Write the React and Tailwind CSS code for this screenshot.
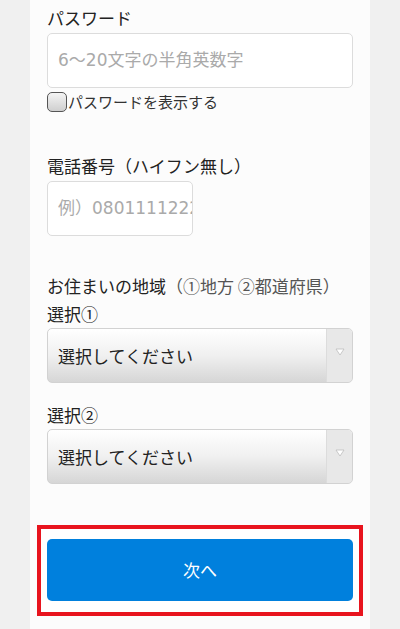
import React from 'react';

const font = { fontFamily: '"Noto Sans CJK JP", "Noto Sans", sans-serif' };
const placeholderFont = { fontFamily: '"DejaVu Sans", "Noto Sans CJK JP", sans-serif' };

const SelectBox = () => (
  <div className="mt-[2px] flex h-[55px] w-full overflow-hidden rounded-[5px] border border-[#d2d2d2] bg-gradient-to-b from-[#ffffff] via-[#f0f0f0] to-[#d6d6d6]">
    <div className="flex flex-1 items-center pl-[10px] text-[17px] text-[#222]">選択してください</div>
    <div className="flex w-[26px] items-start justify-center border-l border-[#dcdcdc] bg-[#e8e8e8] pt-[19px]">
      <svg width="10" height="8" viewBox="0 0 10 8">
        <path d="M1 1 L9 1 L5 7 Z" fill="#ffffff" stroke="#bdbdbd" strokeWidth="0.8" />
      </svg>
    </div>
  </div>
);

const App = () => {
  return (
    <div className="min-h-[629px] bg-[#f0f0f0]" style={font}>
      <div className="mx-auto min-h-[629px] w-[340px] bg-[#fcfcfc] px-[17px] pt-[5px]">
        {/* Password */}
        <div className="text-[17px] leading-[25px] text-[#222]">パスワード</div>
        <div
          className="mt-[3px] flex h-[55px] items-center rounded-[5px] border border-[#dcdcdc] bg-white pl-[10px] text-[17px] text-[#aaa]"
          style={placeholderFont}
        >
          6〜20文字の半角英数字
        </div>
        <div className="mt-[4px] flex h-[20px] items-center">
          <span className="h-[20px] w-[20px] rounded-[5px] border-[1.5px] border-[#555] bg-gradient-to-b from-[#f4f4f4] to-[#cfcfcf]" />
          <span className="ml-[1px] text-[15px] leading-[20px] text-[#333]">パスワードを表示する</span>
        </div>

        {/* Phone */}
        <div className="mt-[41px] text-[17px] leading-[25px] text-[#222]">電話番号（ハイフン無し）</div>
        <div
          className="mt-[3px] flex h-[55px] w-[146px] items-center overflow-hidden whitespace-nowrap rounded-[5px] border border-[#dcdcdc] bg-white pl-[10px] text-[17px] text-[#aaa]"
          style={placeholderFont}
        >
          例）08011112222
        </div>

        {/* Region */}
        <div className="mt-[37px] text-[17px] leading-[25px] text-[#222]">
          お住まいの地域<span className="text-[#555]">（①地方 ②都道府県）</span>
        </div>
        <div className="mt-[3px] text-[17px] leading-[25px] text-[#222]">選択①</div>
        <SelectBox />
        <div className="mt-[19px] text-[17px] leading-[25px] text-[#222]">選択②</div>
        <SelectBox />

        {/* Next */}
        <div className="-mx-[10px] mt-[41px] border-4 border-[#e8141e] bg-white px-[6px] pt-[10px] pb-[11px]">
          <button className="flex h-[62px] w-full items-center justify-center rounded-[5px] bg-[#0080dd] text-[17px] text-white">
            次へ
          </button>
        </div>
      </div>
    </div>
  );
};

export default App;
